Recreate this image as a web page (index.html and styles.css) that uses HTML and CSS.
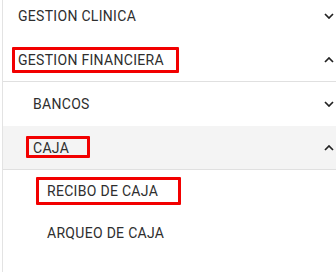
FILE: index.html
```html
<!DOCTYPE html>
<html>
<head>
<meta charset="utf-8">
<link rel="stylesheet" href="styles.css">
</head>
<body>
<nav class="menu">
  <div class="row lvl1 first">
    <span class="label">GESTION CLINICA</span>
    <svg class="chev" viewBox="0 0 10 6" width="10" height="6"><polyline points="1,1 5,5 9,1"/></svg>
  </div>
  <div class="row lvl1 divided">
    <span class="label mark mark-a">GESTION FINANCIERA</span>
    <svg class="chev" viewBox="0 0 10 6" width="10" height="6"><polyline points="1,5 5,1 9,5"/></svg>
  </div>
  <div class="row lvl2">
    <span class="label">BANCOS</span>
    <svg class="chev" viewBox="0 0 10 6" width="10" height="6"><polyline points="1,1 5,5 9,1"/></svg>
  </div>
  <div class="row lvl2 active divided">
    <span class="label mark mark-b">CAJA</span>
    <svg class="chev" viewBox="0 0 10 6" width="10" height="6"><polyline points="1,5 5,1 9,5"/></svg>
  </div>
  <div class="row lvl3">
    <span class="label mark mark-c">RECIBO DE CAJA</span>
  </div>
  <div class="row lvl3">
    <span class="label">ARQUEO DE CAJA</span>
  </div>
</nav>
</body>
</html>
```

FILE: styles.css
```css
html, body {
  margin: 0;
  padding: 0;
  background: #fff;
  overflow: hidden;
}
body {
  width: 336px;
  height: 272px;
  font-family: Roboto, "Liberation Sans", sans-serif;
}
.menu {
  margin-left: 2px;
  border-left: 1px solid #e3e3e3;
  margin-top: -6px;
  height: 290px;
}
.row {
  display: flex;
  align-items: center;
  justify-content: space-between;
  height: 44px;
  box-sizing: border-box;
  padding-right: 2px;
  color: #2e2e2e;
  font-size: 14px;
  letter-spacing: 0.3px;
}
.row.divided {
  border-bottom: 1px solid #e0e0e0;
}
.lvl1 { padding-left: 15px; }
.lvl2 { padding-left: 30px; }
.lvl3 { padding-left: 44px; height: 42px; }
.active { background: #f4f4f4; }
.label {
  position: relative;
  display: inline-block;
  line-height: 16px;
}
.mark::after {
  content: "";
  position: absolute;
  border: 3px solid #f20000;
  border-radius: 1px;
}
.mark-a::after { left: -6px; right: -15px; top: -5px; bottom: -5px; }
.mark-b::after { left: -7px; right: -21px; top: -4px; bottom: -2px; }
.mark-c::after { left: -11px; right: -23px; top: -6px; bottom: -6px; }
.chev {
  fill: none;
  stroke: #222;
  stroke-width: 1.7;
}
```
